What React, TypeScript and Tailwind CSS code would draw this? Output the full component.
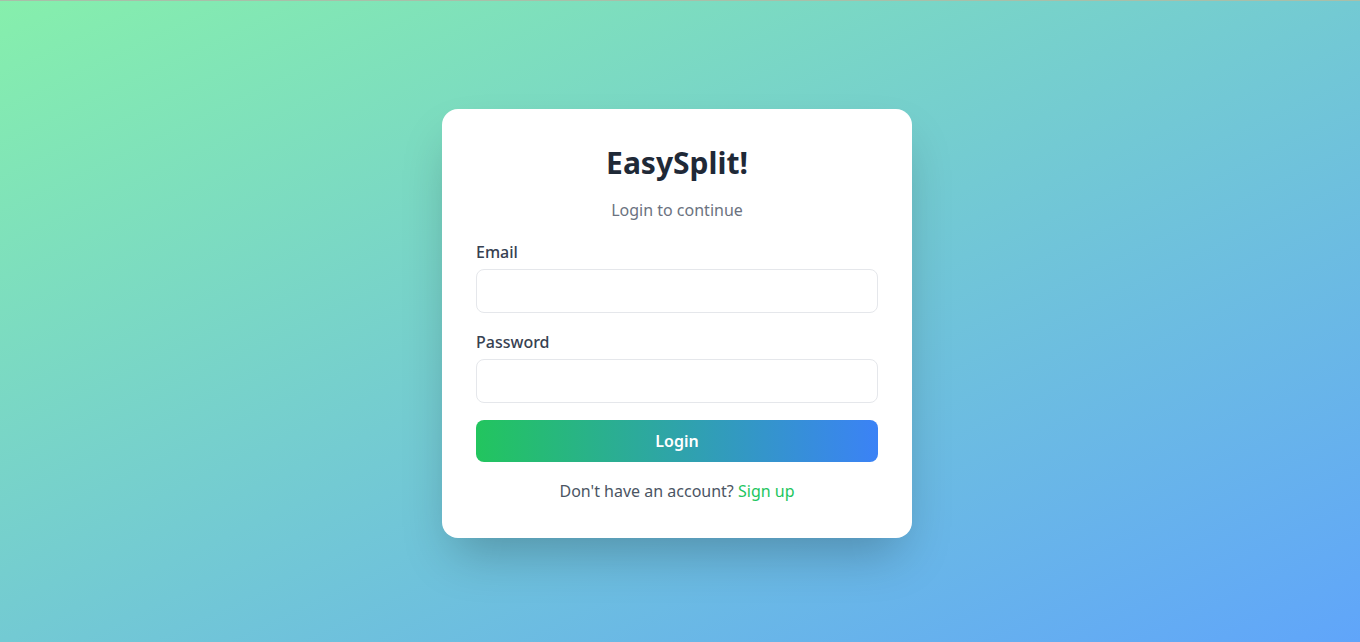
export default function App() {
  return (
    <div
      className="min-h-screen w-full bg-[linear-gradient(to_bottom_right,#86efac,#60a5fa)] border-t border-[#a9bfa9] flex items-center justify-center"
      style={{ fontFamily: '"Segoe UI", "Noto Sans", sans-serif' }}
    >
      <div className="w-[470px] mr-[6px] mt-[4px] bg-white rounded-2xl shadow-2xl px-[34px] pt-[36px] pb-[35px]">
        <h1 className="text-3xl font-bold text-[#1f2937] text-center">EasySplit!</h1>
        <p className="text-[#6b7280] text-center mt-[17px]">Login to continue</p>

        <form className="mt-[18px] flex flex-col gap-[17px]" onSubmit={(e) => e.preventDefault()}>
          <div>
            <label className="block text-[#374151] font-medium mb-[5px]">Email</label>
            <input
              type="email"
              className="w-full h-[44px] px-3 border border-[#e5e7eb] rounded-lg outline-none"
            />
          </div>
          <div>
            <label className="block text-[#374151] font-medium mb-[5px]">Password</label>
            <input
              type="password"
              className="w-full h-[44px] px-3 border border-[#e5e7eb] rounded-lg outline-none"
            />
          </div>
          <button
            type="submit"
            className="w-full h-[42px] rounded-lg bg-[linear-gradient(to_right,#22c55e,#3b82f6)] text-white font-semibold"
          >
            Login
          </button>
        </form>

        <p className="text-center text-[#4b5563] mt-[17px]">
          Don't have an account?{" "}
          <a href="#" className="text-[#22c55e]">
            Sign up
          </a>
        </p>
      </div>
    </div>
  );
}
